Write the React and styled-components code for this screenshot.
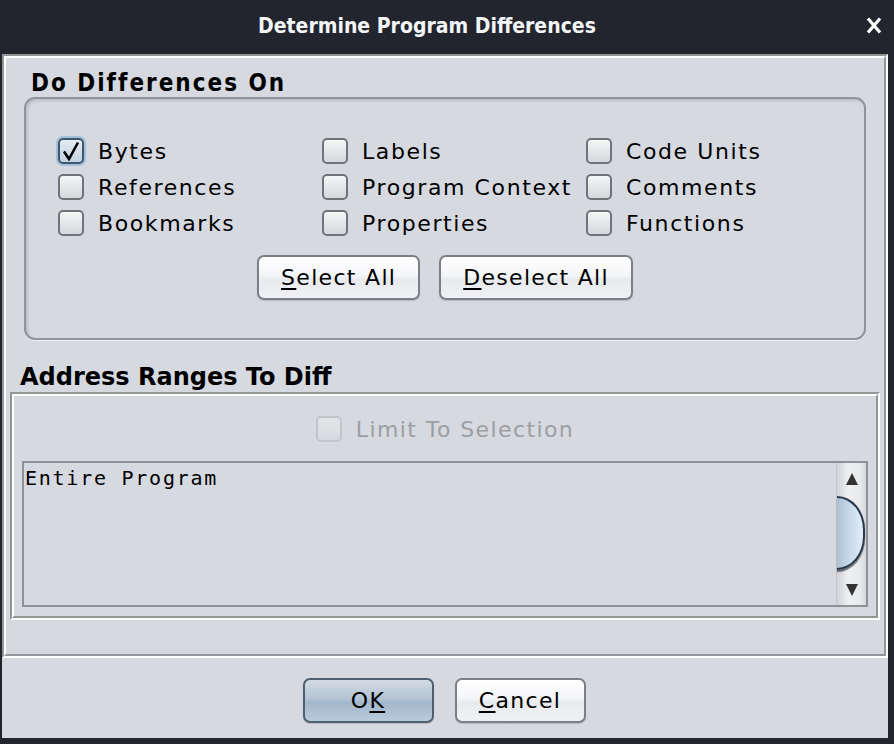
import React from "react";
import styled, { createGlobalStyle } from "styled-components";

const Global = createGlobalStyle`
  html, body { margin: 0; padding: 0; background: #22252e; }
  * { box-sizing: border-box; }
`;

const UI = `"DejaVu Sans", "Liberation Sans", sans-serif`;
const COND = `"DejaVu Sans Condensed", "DejaVu Sans", sans-serif`;

const Win = styled.div`
  width: 894px;
  height: 744px;
  background: #22252e;
  display: flex;
  flex-direction: column;
  font-family: ${UI};
`;

const TitleBar = styled.div`
  height: 54px;
  display: flex;
  align-items: center;
  flex: none;
`;

const Title = styled.div`
  flex: 1;
  text-align: center;
  color: #f4f5f7;
  font-family: ${COND};
  font-stretch: condensed;
  font-weight: bold;
  font-size: 21px;
  padding-bottom: 3px;
`;

const Close = styled.div`
  width: 40px;
  display: flex;
  justify-content: center;
  align-items: center;
  padding-bottom: 3px;
`;

const Body = styled.div`
  margin: 0 6px 6px 2px;
  flex: 1;
  background: #d6d9e0;
  display: flex;
  flex-direction: column;
`;

const EtchedOuter = styled.div`
  height: ${(p) => p.$h}px;
  border-top: 2px solid #939599;
  border-left: 2px solid #939599;
  border-right: 2px solid #ffffff;
  border-bottom: 2px solid #ffffff;
  flex: none;
`;

const EtchedInner = styled.div`
  height: 100%;
  border-top: 2px solid #ffffff;
  border-left: 2px solid #ffffff;
  border-right: 2px solid #939599;
  border-bottom: 2px solid #939599;
  display: flex;
  flex-direction: column;
  padding: ${(p) => p.$pad};
`;

const Section = styled.div`
  margin: ${(p) => p.$m};
  display: flex;
  flex-direction: column;
`;

const GroupTitle = styled.div`
  font-family: ${COND};
  font-stretch: condensed;
  font-weight: bold;
  font-size: 24px;
  line-height: 28px;
  letter-spacing: 2px;
  color: #000;
  padding-left: 7px;
  margin-top: 11px;
`;

const PanelTitle = styled.div`
  font-family: ${UI};
  font-weight: bold;
  font-size: 24px;
  line-height: 28px;
  color: #000;
  margin: 23px 0 1px 10px;
`;

const GroupBox = styled.div`
  height: 243px;
  border: 2px solid #909398;
  border-radius: 11px;
  box-shadow: inset 2px 2px 3px rgba(0, 0, 0, 0.12), 0 1px 0 rgba(255,255,255,0.6);
  padding: 34px 0 0 32px;
  display: flex;
  flex-direction: column;
`;

const Grid = styled.div`
  display: grid;
  grid-template-columns: repeat(3, 264px);
  grid-auto-rows: 36px;
`;

const CheckRow = styled.label`
  display: flex;
  align-items: center;
  gap: 14px;
  font-size: 22px;
  letter-spacing: ${(p) => (p.$disabled ? "1.4px" : "1.6px")};
  color: ${(p) => (p.$disabled ? "#9b9ea3" : "#000")};
  white-space: nowrap;
`;

const Box = styled.span`
  width: 26px;
  height: 26px;
  flex: none;
  border-radius: 5px;
  display: flex;
  align-items: center;
  justify-content: center;
  border: 2px solid ${(p) => (p.$disabled ? "#c2c4c8" : p.$checked ? "#3f566d" : "#707379")};
  background: ${(p) =>
    p.$disabled
      ? "linear-gradient(#e2e4e7, #d8dadf)"
      : p.$checked
      ? "linear-gradient(#e4ebf2, #c4d2e0)"
      : "linear-gradient(#f6f7f8, #e4e6e9 50%, #d5d7db)"};
  box-shadow: ${(p) => (p.$checked ? "0 0 0 2px #a3c0dc" : "none")};
`;

const ButtonRow = styled.div`
  display: flex;
  justify-content: center;
  gap: 19px;
  margin: 14px 32px 0 0;
`;

const Btn = styled.button`
  height: 45px;
  width: ${(p) => (p.$w ? `${p.$w}px` : "auto")};
  padding: 0 22px;
  border-radius: 7px;
  font-family: ${UI};
  font-size: 22px;
  letter-spacing: 1.3px;
  color: #000;
  border: 2px solid ${(p) => (p.$def ? "#4f5f70" : "#7c7f85")};
  background: ${(p) =>
    p.$def
      ? "linear-gradient(#d2dbe4, #b4c4d4 45%, #a3b7cb 55%, #b9cadb)"
      : "linear-gradient(#ffffff, #f4f5f7 45%, #e8eaee 55%, #f0f1f4)"};
  box-shadow: 0 1px 1px rgba(0, 0, 0, 0.15);
  display: flex;
  align-items: center;
  justify-content: center;
  cursor: default;
`;

const U = styled.span`
  text-decoration: underline;
  text-underline-offset: 3px;
  text-decoration-thickness: 2px;
`;

const LimitRow = styled.div`
  display: flex;
  justify-content: center;
  height: 36px;
  margin-top: 15px;
`;

const TextArea = styled.div`
  margin: 14px 8px 0 8px;
  height: 146px;
  border: 2px solid #8e9196;
  display: flex;
`;

const Mono = styled.div`
  flex: 1;
  font-family: "DejaVu Sans Mono", "Liberation Mono", monospace;
  font-size: 20px;
  line-height: 24px;
  letter-spacing: 1.75px;
  padding: 3px 0 0 1px;
  color: #000;
`;

const Scroll = styled.div`
  width: 30px;
  display: flex;
  flex-direction: column;
  background: linear-gradient(90deg, #d0d3d8, #eef0f2 40%, #e6e8eb 80%, #d6d8dc);
  border-left: 1px solid #c4c6ca;
`;

const Arrow = styled.div`
  height: 31px;
  display: flex;
  align-items: center;
  justify-content: center;
`;

const Track = styled.div`
  flex: 1;
  padding: 2px 1px 4px 0;
  display: flex;
`;

const Thumb = styled.div`
  flex: 1;
  border: 2px solid #26394b;
  border-left: none;
  border-radius: 0 30px 30px 0 / 0 36px 36px 0;
  background: linear-gradient(90deg, #a9c0d6, #c4d6e6 40%, #e3eef7);
  box-shadow: 0 2px 1px rgba(0, 0, 0, 0.55);
`;

const Footer = styled.div`
  flex: 1;
  display: flex;
  justify-content: center;
  align-items: center;
  gap: 21px;
  padding: 5px 2px 0 0;
`;

function CheckBox({ label, checked, disabled }) {
  return (
    <CheckRow $disabled={disabled}>
      <Box $checked={checked} $disabled={disabled}>
        {checked && (
          <svg width="20" height="20" viewBox="0 0 20 20">
            <path d="M3 10.5 L8 18 L17 1.5" fill="none" stroke="#000" strokeWidth="2.6" strokeLinejoin="miter" />
          </svg>
        )}
      </Box>
      {label}
    </CheckRow>
  );
}

const items = [
  ["Bytes", true],
  ["Labels"],
  ["Code Units"],
  ["References"],
  ["Program Context"],
  ["Comments"],
  ["Bookmarks"],
  ["Properties"],
  ["Functions"],
];

export default function App() {
  return (
    <Win>
      <Global />
      <TitleBar>
        <Title>Determine Program Differences</Title>
        <Close>
          <svg width="16" height="17" viewBox="0 0 16 17">
            <path d="M2 1.5 L14 15.5 M14 1.5 L2 15.5" stroke="#fff" strokeWidth="3.2" />
          </svg>
        </Close>
      </TitleBar>
      <Body>
        <EtchedOuter $h={604}>
          <EtchedInner $pad="0 4px">
            <Section $m="0 14px">
              <GroupTitle>Do Differences On</GroupTitle>
              <GroupBox>
                <Grid>
                  {items.map(([l, c]) => (
                    <CheckBox key={l} label={l} checked={c} />
                  ))}
                </Grid>
                <ButtonRow>
                  <Btn>
                    <U>S</U>elect All
                  </Btn>
                  <Btn>
                    <U>D</U>eselect All
                  </Btn>
                </ButtonRow>
              </GroupBox>
            </Section>
            <PanelTitle>Address Ranges To Diff</PanelTitle>
            <EtchedOuter $h={228}>
              <EtchedInner $pad="0">
                <LimitRow>
                  <CheckBox label="Limit To Selection" disabled />
                </LimitRow>
                <TextArea>
                  <Mono>Entire Program</Mono>
                  <Scroll>
                    <Arrow>
                      <svg width="12" height="12" viewBox="0 0 12 12">
                        <polygon points="6,0 12,12 0,12" fill="#333" />
                      </svg>
                    </Arrow>
                    <Track>
                      <Thumb />
                    </Track>
                    <Arrow>
                      <svg width="12" height="12" viewBox="0 0 12 12">
                        <polygon points="0,0 12,0 6,12" fill="#333" />
                      </svg>
                    </Arrow>
                  </Scroll>
                </TextArea>
              </EtchedInner>
            </EtchedOuter>
          </EtchedInner>
        </EtchedOuter>
        <Footer>
          <Btn $def $w={131}>
            O<U>K</U>
          </Btn>
          <Btn $w={131}>
            <U>C</U>ancel
          </Btn>
        </Footer>
      </Body>
    </Win>
  );
}
